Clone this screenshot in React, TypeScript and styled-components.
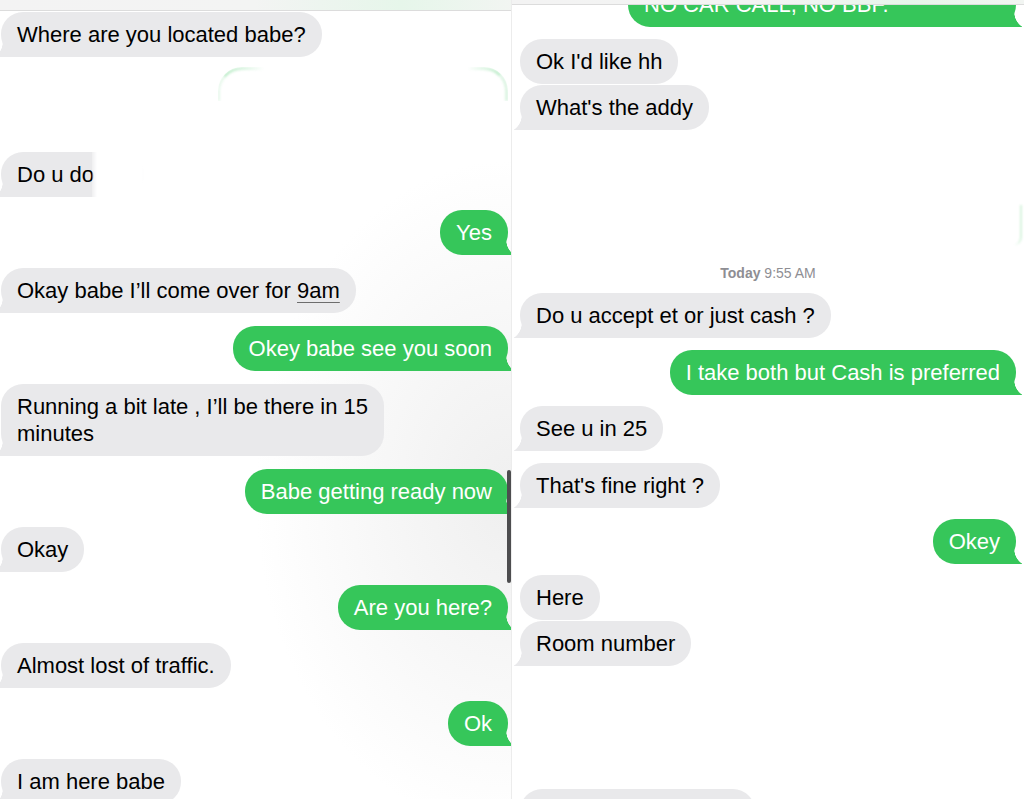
import React from "react";
import styled, { createGlobalStyle, css } from "styled-components";

const GREEN = "#36c65a";
const GRAY = "#e9e9eb";

const Global = createGlobalStyle`
  html, body { margin: 0; padding: 0; background: #fff; }
  body { font-family: "Liberation Sans", Arial, sans-serif; }
`;

const Page = styled.div`
  display: flex;
  width: 1024px;
  height: 799px;
  overflow: hidden;
  background: #fff;
`;

const Panel = styled.div<{ $side: "left" | "right" }>`
  position: relative;
  box-sizing: border-box;
  flex: 0 0 512px;
  width: 512px;
  height: 799px;
  overflow: hidden;
  display: flex;
  flex-direction: column;
  ${(p) =>
    p.$side === "left"
      ? css`
          padding: 0 3px 0 1px;
          background: radial-gradient(ellipse 50% 42% at 100% 62%, #efefef 0%, rgba(255, 255, 255, 0) 100%), #fff;
          border-right: 1px solid #ececec;
        `
      : css`
          padding: 0 8px;
          background: #fff;
        `}
`;

const TopStrip = styled.div<{ $h: number }>`
  flex: 0 0 auto;
  height: ${(p) => p.$h}px;
  margin: 0 -8px;
  background: linear-gradient(90deg, #f3f3f3 0%, #f3f4f3 50%, #e6f6ea 78%, #f2f5f2 100%);
  border-bottom: 1px solid #dcdcdc;
  position: relative;
  z-index: 2;
`;

const Bubble = styled.div<{ $me?: boolean; $tail?: boolean; $gap?: number; $minW?: number }>`
  position: relative;
  isolation: isolate;
  flex: 0 0 auto;
  box-sizing: border-box;
  align-self: ${(p) => (p.$me ? "flex-end" : "flex-start")};
  margin-top: ${(p) => (p.$gap ?? 13)}px;
  min-width: ${(p) => (p.$minW ? `${p.$minW}px` : "0")};
  padding: 9px 16px;
  border-radius: 22px;
  font-size: 22px;
  line-height: 27px;
  white-space: nowrap;
  background: ${(p) => (p.$me ? GREEN : GRAY)};
  color: ${(p) => (p.$me ? "#fff" : "#000")};
  ${(p) =>
    p.$tail === false
      ? ""
      : p.$me
      ? css`
          &::after {
            content: "";
            position: absolute;
            z-index: -1;
            right: -6px;
            bottom: 0;
            width: 28px;
            height: 20px;
            background: radial-gradient(circle 18px at 38px 5px, transparent 17.5px, ${GREEN} 18px);
          }
        `
      : css`
          &::after {
            content: "";
            position: absolute;
            z-index: -1;
            left: -6px;
            bottom: 0;
            width: 28px;
            height: 20px;
            background: radial-gradient(circle 18px at -10px 5px, transparent 17.5px, ${GRAY} 18px);
          }
        `}
`;

const Detected = styled.span`
  text-decoration: underline;
  text-decoration-color: #6d6d6d;
  text-decoration-thickness: 1px;
  text-underline-offset: 4px;
`;

const Whiteout = styled.div`
  position: absolute;
  top: -6px;
  bottom: -6px;
  left: 91px;
  width: 90px;
  background: linear-gradient(90deg, rgba(255, 255, 255, 0.3) 0px, #fff 5px, #fff 55%, rgba(255, 255, 255, 0) 100%);
  z-index: 1;
`;

const Ghost = styled.div<{ $gap: number; $w: number; $h: number }>`
  flex: 0 0 auto;
  align-self: flex-end;
  margin-top: ${(p) => p.$gap}px;
  width: ${(p) => p.$w}px;
  height: ${(p) => p.$h}px;
  border-radius: 24px 24px 0 0;
  border-top: 3px solid rgba(54, 198, 90, 0.4);
  border-left: 2px solid rgba(54, 198, 90, 0.14);
  border-right: 3px solid rgba(54, 198, 90, 0.18);
  box-sizing: border-box;
  filter: blur(1.2px);
  -webkit-mask-image: linear-gradient(90deg, #000 0%, rgba(0, 0, 0, 0.5) 8%, transparent 16%, transparent 86%, #000 100%);
  mask-image: linear-gradient(90deg, #000 0%, rgba(0, 0, 0, 0.5) 8%, transparent 16%, transparent 86%, #000 100%);
`;

const Blank = styled.div<{ $h: number; $w: number }>`
  flex: 0 0 auto;
  width: ${(p) => p.$w}px;
  height: ${(p) => p.$h}px;
`;

const Stamp = styled.div<{ $gap: number }>`
  flex: 0 0 auto;
  margin-top: ${(p) => p.$gap}px;
  height: 20px;
  line-height: 20px;
  text-align: center;
  font-size: 14px;
  color: #8e8e93;
  b {
    font-weight: 700;
  }
`;

const ScrollIndicator = styled.div`
  position: absolute;
  right: 0;
  top: 470px;
  width: 4px;
  height: 113px;
  border-radius: 2px;
  background: #4d4d4f;
  z-index: 3;
`;

const FaintTail = styled.div`
  position: absolute;
  right: 2px;
  top: 205px;
  width: 8px;
  height: 40px;
  border-radius: 0 0 8px 0;
  border-right: 2px solid rgba(54, 198, 90, 0.2);
  filter: blur(1px);
`;

const LeftPanel = () => (
  <Panel $side="left">
    <TopStrip $h={10} />
    <Bubble $gap={1}>Where are you located babe?</Bubble>
    <Ghost $gap={10} $w={290} $h={34} />
    <Bubble $gap={51} style={{ paddingRight: 50 }}>
      Do u do
      <Whiteout />
    </Bubble>
    <Bubble $me $gap={13}>Yes</Bubble>
    <Bubble>
      Okay babe I’ll come over for <Detected>9am</Detected>
    </Bubble>
    <Bubble $me>Okey babe see you soon</Bubble>
    <Bubble>
      Running a bit late , I’ll be there in 15
      <br />
      minutes
    </Bubble>
    <Bubble $me>Babe getting ready now</Bubble>
    <Bubble>Okay</Bubble>
    <Bubble $me>Are you here?</Bubble>
    <Bubble>Almost lost of traffic.</Bubble>
    <Bubble $me>Ok</Bubble>
    <Bubble>I am here babe</Bubble>
    <ScrollIndicator />
  </Panel>
);

const RightPanel = () => (
  <Panel $side="right">
    <TopStrip $h={4} />
    <Bubble $me $gap={-23} $minW={388}>NO CAR CALL, NO BBF.</Bubble>
    <Bubble $gap={12} $tail={false}>Ok I'd like hh</Bubble>
    <Bubble $gap={1}>What's the addy</Bubble>
    <FaintTail />
    <Stamp $gap={133}>
      <b>Today</b> 9:55 AM
    </Stamp>
    <Bubble $gap={10}>Do u accept et or just cash ?</Bubble>
    <Bubble $me $gap={12}>I take both but Cash is preferred</Bubble>
    <Bubble $gap={11}>See u in 25</Bubble>
    <Bubble $gap={12}>That's fine right ?</Bubble>
    <Bubble $me $gap={11}>Okey</Bubble>
    <Bubble $gap={11} $tail={false}>Here</Bubble>
    <Bubble $gap={1}>Room number</Bubble>
    <Bubble $gap={123} $tail={false}>
      <Blank $w={203} $h={27} />
    </Bubble>
  </Panel>
);

export default function App() {
  return (
    <>
      <Global />
      <Page>
        <LeftPanel />
        <RightPanel />
      </Page>
    </>
  );
}
